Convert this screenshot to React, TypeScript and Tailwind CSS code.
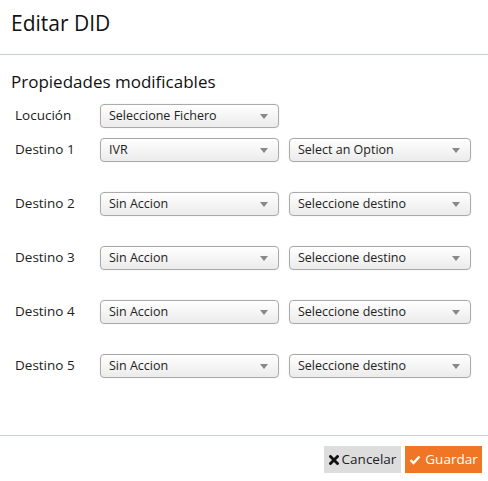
import React from 'react';

function Select({ value, width }: { value: string; width: string }) {
  return (
    <div
      className={`${width} h-6 flex items-center justify-between pl-2 pr-[10px] rounded-[4px] border border-[#aaaaaa] bg-gradient-to-b from-white to-[#ebebeb] text-[12.5px] text-[#222] shadow-[0_0_2px_rgba(0,0,0,0.08)]`}
    >
      <span>{value}</span>
      <svg width="8" height="5" viewBox="0 0 8 5">
        <path d="M0 0 L8 0 L4 5 Z" fill="#888" />
      </svg>
    </div>
  );
}

const destinos = [
  { label: 'Destino 1', a: 'IVR', b: 'Select an Option' },
  { label: 'Destino 2', a: 'Sin Accion', b: 'Seleccione destino' },
  { label: 'Destino 3', a: 'Sin Accion', b: 'Seleccione destino' },
  { label: 'Destino 4', a: 'Sin Accion', b: 'Seleccione destino' },
  { label: 'Destino 5', a: 'Sin Accion', b: 'Seleccione destino' },
];

export default function App() {
  return (
    <div className="w-[488px] h-[481px] bg-white flex flex-col text-[#222]" style={{ fontFamily: '"Open Sans", "Noto Sans", sans-serif' }}>
      {/* Header */}
      <header className="h-[55px] border-b border-[#c9d0d3] flex items-center px-[11px]">
        <h1 className="text-[21px] font-medium text-[#111] leading-none -mt-[8px]">Editar DID</h1>
      </header>

      {/* Body */}
      <main className="flex-1 px-[11px] pt-[16px]">
        <h2 className="text-[17px] font-medium leading-[22px] text-[#111]">Propiedades modificables</h2>
        <div className="mt-[11px] pl-1">
          <div className="flex items-start">
            <span className="w-[85px] text-[13.5px] leading-[20px] mt-[1px]">Locución</span>
            <Select value="Seleccione Fichero" width="w-[179px]" />
          </div>
          {destinos.map((d, i) => (
            <div key={d.label} className={`flex items-start ${i === 0 ? 'mt-[10px]' : 'mt-[30px]'}`}>
              <span className="w-[85px] text-[13.5px] leading-[20px] mt-[1px]">{d.label}</span>
              <Select value={d.a} width="w-[179px]" />
              <div className="ml-[10px]">
                <Select value={d.b} width="w-[182px]" />
              </div>
            </div>
          ))}
        </div>
      </main>

      {/* Footer */}
      <footer className="h-[46px] border-t border-[#c9d0d3] flex items-start justify-end gap-[4px] pr-[6px] pt-[10px]">
        <button className="h-[27px] w-[77px] bg-[#dddddd] text-[13.5px] flex items-center justify-center gap-[3px] text-[#222]">
          <svg width="10" height="10" viewBox="0 0 10 10">
            <path d="M1.5 1.5 L8.5 8.5 M8.5 1.5 L1.5 8.5" stroke="#111" strokeWidth="2.8" strokeLinecap="square" />
          </svg>
          Cancelar
        </button>
        <button className="h-[27px] w-[77px] bg-[#f07524] text-[13.5px] flex items-center justify-center gap-[4px] text-white">
          <svg width="12" height="10" viewBox="0 0 12 10">
            <path d="M1.5 5 L4.5 8 L10.5 1.5" stroke="#fff" strokeWidth="2.4" fill="none" />
          </svg>
          Guardar
        </button>
      </footer>
    </div>
  );
}
